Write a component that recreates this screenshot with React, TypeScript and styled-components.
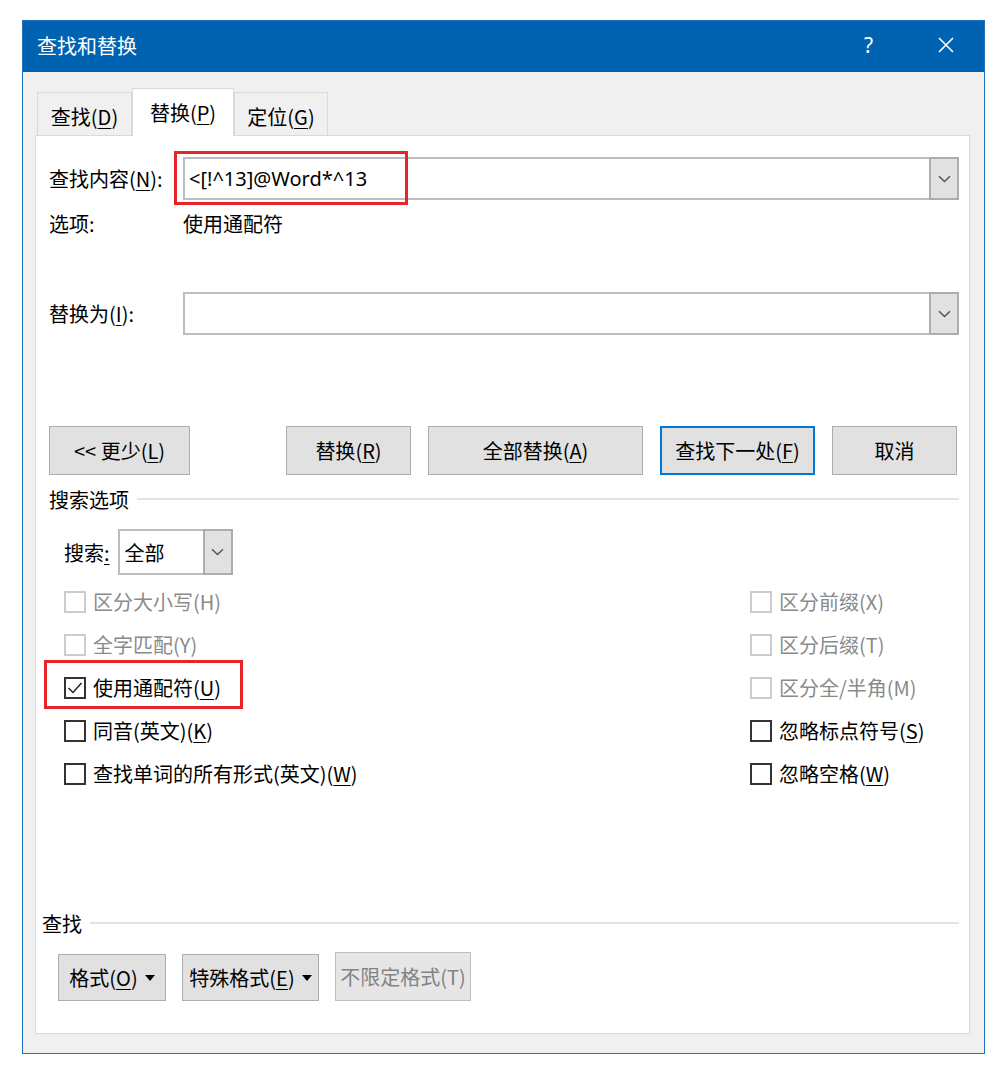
import React from 'react'
import styled, { createGlobalStyle } from 'styled-components'

const GlobalStyle = createGlobalStyle`
  html, body {
    margin: 0;
    padding: 0;
    background: #ffffff;
  }
  body {
    font-family: "Noto Sans CJK SC", "Microsoft YaHei", "Noto Sans", sans-serif;
    font-size: 20px;
    color: #000000;
  }
  u {
    text-decoration-thickness: 1px;
    text-underline-offset: 3px;
  }
`

const tabs = [
  { key: 'find', text: '查找', hot: 'D', width: 95 },
  { key: 'replace', text: '替换', hot: 'P', width: 102, active: true },
  { key: 'goto', text: '定位', hot: 'G', width: 94 },
]

const options = [
  { text: '区分大小写', hot: 'H', disabled: true },
  { text: '区分前缀', hot: 'X', disabled: true },
  { text: '全字匹配', hot: 'Y', disabled: true },
  { text: '区分后缀', hot: 'T', disabled: true },
  { text: '使用通配符', hot: 'U', checked: true, marked: true },
  { text: '区分全/半角', hot: 'M', disabled: true },
  { text: '同音(英文)', hot: 'K' },
  { text: '忽略标点符号', hot: 'S' },
  { text: '查找单词的所有形式(英文)', hot: 'W' },
  { text: '忽略空格', hot: 'W' },
]

function Hotkey({ text, hot, plain }: { text: string; hot: string; plain?: boolean }) {
  return (
    <span>
      {text}({plain ? hot : <u>{hot}</u>})
    </span>
  )
}

function Chevron() {
  return (
    <svg width="13" height="8" viewBox="0 0 13 8">
      <path d="M1 1.2 L6.5 6.5 L12 1.2" fill="none" stroke="#555" strokeWidth="1.5" />
    </svg>
  )
}

function Caret() {
  return (
    <svg width="10" height="6" viewBox="0 0 10 6">
      <path d="M0 0 H10 L5 6 Z" fill="#000" />
    </svg>
  )
}

function App() {
  return (
    <>
      <GlobalStyle />
      <Page>
        <Window>
          <TitleBar>
            <TitleText>查找和替换</TitleText>
            <CaptionButtons>
              <CaptionButton>?</CaptionButton>
              <CaptionButton>
                <svg width="16" height="16" viewBox="0 0 16 16">
                  <path d="M1 1 L15 15 M15 1 L1 15" stroke="#fff" strokeWidth="1.6" />
                </svg>
              </CaptionButton>
            </CaptionButtons>
          </TitleBar>

          <Body>
            <TabStrip>
              {tabs.map(t => (
                <Tab key={t.key} $active={!!t.active} $w={t.width}>
                  <Hotkey text={t.text} hot={t.hot} />
                </Tab>
              ))}
            </TabStrip>

            <Panel>
              <FieldRow>
                <FieldLabel>
                  查找内容(<u>N</u>):
                </FieldLabel>
                <Combo>
                  <ComboText>&lt;[!^13]@Word*^13</ComboText>
                  <DropButton>
                    <Chevron />
                  </DropButton>
                  <Mark $left={-11} $top={-8} $w={234} $h={54} />
                </Combo>
              </FieldRow>

              <InfoRow>
                <FieldLabel>选项:</FieldLabel>
                <span>使用通配符</span>
              </InfoRow>

              <FieldRow $gap={54}>
                <FieldLabel>
                  替换为(<u>I</u>):
                </FieldLabel>
                <Combo>
                  <ComboText />
                  <DropButton>
                    <Chevron />
                  </DropButton>
                </Combo>
              </FieldRow>

              <ButtonRow>
                <Button $w={141} $push>
                  <span>&lt;&lt; 更少(<u>L</u>)</span>
                </Button>
                <Button $w={125}>
                  <Hotkey text="替换" hot="R" />
                </Button>
                <Button $w={215}>
                  <Hotkey text="全部替换" hot="A" />
                </Button>
                <Button $w={155} $primary>
                  <Hotkey text="查找下一处" hot="F" />
                </Button>
                <Button $w={125}>
                  <span>取消</span>
                </Button>
              </ButtonRow>

              <GroupHeader $gap={11}>
                <span>搜索选项</span>
                <GroupLine />
              </GroupHeader>

              <SearchRow>
                <span>
                  搜索<u>:</u>
                </span>
                <Select>
                  <SelectText>全部</SelectText>
                  <DropButton>
                    <Chevron />
                  </DropButton>
                </Select>
              </SearchRow>

              <OptionGrid>
                {options.map((o, i) => (
                  <CheckItem key={i} $disabled={!!o.disabled}>
                    <CheckBox $disabled={!!o.disabled}>
                      {o.checked && (
                        <svg width="16" height="14" viewBox="0 0 16 14">
                          <path d="M1.5 7 L6 11.5 L14.5 2" fill="none" stroke="#222" strokeWidth="1.5" />
                        </svg>
                      )}
                    </CheckBox>
                    <Hotkey text={o.text} hot={o.hot} plain={o.disabled} />
                    {o.marked && <Mark $left={-20} $top={-6} $w={199} $h={49} />}
                  </CheckItem>
                ))}
              </OptionGrid>

              <GroupHeader $gap={115} $shift={-7}>
                <span>查找</span>
                <GroupLine />
              </GroupHeader>

              <FormatRow>
                <Button $w={108} $h={47}>
                  <Hotkey text="格式" hot="O" />
                  <Caret />
                </Button>
                <Button $w={137} $h={47}>
                  <Hotkey text="特殊格式" hot="E" />
                  <Caret />
                </Button>
                <Button $w={136} $disabled>
                  <Hotkey text="不限定格式" hot="T" plain />
                </Button>
              </FormatRow>
            </Panel>
          </Body>
        </Window>
      </Page>
    </>
  )
}

export default App

const Page = styled.div`
  padding: 20px 0 0 22px;
`

const Window = styled.div`
  width: 963px;
  box-sizing: border-box;
  border: 1px solid #1e70bf;
  background: #f0f0f0;
  display: flex;
  flex-direction: column;
`

const TitleBar = styled.div`
  height: 51px;
  background: #0063b1;
  color: #ffffff;
  display: flex;
  align-items: center;
  justify-content: space-between;
  padding-left: 14px;
`

const TitleText = styled.div`
  font-size: 20px;
  margin-top: -2px;
`

const CaptionButtons = styled.div`
  display: flex;
  height: 100%;
`

const CaptionButton = styled.div`
  width: 77px;
  height: 100%;
  display: flex;
  align-items: center;
  justify-content: center;
  font-family: "Noto Sans", sans-serif;
  font-size: 21px;
  padding-bottom: 4px;
  box-sizing: border-box;
`

const Body = styled.div`
  padding: 16px 14px 19px 12px;
  display: flex;
  flex-direction: column;
`

const TabStrip = styled.div`
  display: flex;
  align-items: flex-end;
  margin-left: 2px;
  position: relative;
  z-index: 1;
`

const Tab = styled.div<{ $active: boolean; $w: number }>`
  width: ${p => p.$w}px;
  height: ${p => (p.$active ? 48 : 43)}px;
  margin-bottom: ${p => (p.$active ? -1 : 0)}px;
  box-sizing: border-box;
  border: 1px solid #d9d9d9;
  border-bottom: none;
  background: ${p => (p.$active ? '#ffffff' : '#f0f0f0')};
  display: flex;
  align-items: center;
  justify-content: center;
  padding-top: ${p => (p.$active ? 0 : 5)}px;
`

const Panel = styled.div`
  background: #ffffff;
  border: 1px solid #d9d9d9;
  padding: 21px 10px 32px 13px;
  display: flex;
  flex-direction: column;
`

const FieldRow = styled.div<{ $gap?: number }>`
  display: flex;
  align-items: center;
  margin-top: ${p => p.$gap ?? 0}px;
`

const FieldLabel = styled.div`
  width: 134px;
  flex-shrink: 0;
`

const Combo = styled.div`
  position: relative;
  flex: 1;
  height: 43px;
  box-sizing: border-box;
  border: 2px solid #bdbdbd;
  background: #ffffff;
  display: flex;
  align-items: stretch;
`

const ComboText = styled.div`
  flex: 1;
  display: flex;
  align-items: center;
  padding-left: 4px;
  font-family: "Noto Sans", "Noto Sans CJK SC", sans-serif;
  font-size: 20px;
`

const DropButton = styled.div`
  width: 30px;
  margin: -2px -2px -2px 0;
  box-sizing: border-box;
  border: 2px solid #adadad;
  background: #e1e1e1;
  display: flex;
  align-items: center;
  justify-content: center;
`

const Mark = styled.div<{ $left: number; $top: number; $w: number; $h: number }>`
  position: absolute;
  left: ${p => p.$left}px;
  top: ${p => p.$top}px;
  width: ${p => p.$w}px;
  height: ${p => p.$h}px;
  box-sizing: border-box;
  border: 3px solid #e8232a;
  pointer-events: none;
`

const InfoRow = styled.div`
  display: flex;
  align-items: center;
  height: 30px;
  margin-top: 8px;
`

const ButtonRow = styled.div`
  display: flex;
  gap: 17px;
  margin-top: 91px;
  padding-right: 2px;
`

const Button = styled.div<{ $w: number; $h?: number; $primary?: boolean; $push?: boolean; $disabled?: boolean }>`
  width: ${p => p.$w}px;
  height: ${p => p.$h ?? 49}px;
  box-sizing: border-box;
  background: ${p => (p.$disabled ? '#e6e6e6' : '#e1e1e1')};
  border: ${p => (p.$primary ? '2px solid #0078d7' : p.$disabled ? '1px solid #bfbfbf' : '1px solid #adadad')};
  color: ${p => (p.$disabled ? '#838383' : '#000000')};
  margin-right: ${p => (p.$push ? 'auto' : '0')};
  display: flex;
  align-items: center;
  justify-content: center;
  gap: 7px;
  white-space: nowrap;
`

const GroupHeader = styled.div<{ $gap: number; $shift?: number }>`
  display: flex;
  align-items: center;
  gap: 8px;
  height: 26px;
  margin-top: ${p => p.$gap}px;
  margin-left: ${p => p.$shift ?? 0}px;
`

const GroupLine = styled.div`
  flex: 1;
  height: 2px;
  background: #e3e3e3;
`

const SearchRow = styled.div`
  display: flex;
  align-items: center;
  gap: 8px;
  margin-top: 17px;
  padding-left: 15px;
`

const Select = styled.div`
  width: 115px;
  height: 46px;
  box-sizing: border-box;
  border: 2px solid #bdbdbd;
  background: #ffffff;
  display: flex;
  align-items: stretch;
`

const SelectText = styled.div`
  flex: 1;
  display: flex;
  align-items: center;
  padding-left: 5px;
`

const OptionGrid = styled.div`
  display: grid;
  grid-template-columns: 686px 1fr;
  grid-auto-rows: 43px;
  margin-top: 5px;
  padding-left: 15px;
`

const CheckItem = styled.div<{ $disabled: boolean }>`
  position: relative;
  display: flex;
  align-items: center;
  gap: 7px;
  color: ${p => (p.$disabled ? '#8a8a8a' : '#000000')};
`

const CheckBox = styled.div<{ $disabled: boolean }>`
  width: 22px;
  height: 22px;
  box-sizing: border-box;
  border: 2px solid ${p => (p.$disabled ? '#cccccc' : '#333333')};
  background: #ffffff;
  display: flex;
  align-items: center;
  justify-content: center;
`

const FormatRow = styled.div`
  display: flex;
  align-items: flex-end;
  gap: 16px;
  margin-top: 16px;
  padding-left: 9px;
`
